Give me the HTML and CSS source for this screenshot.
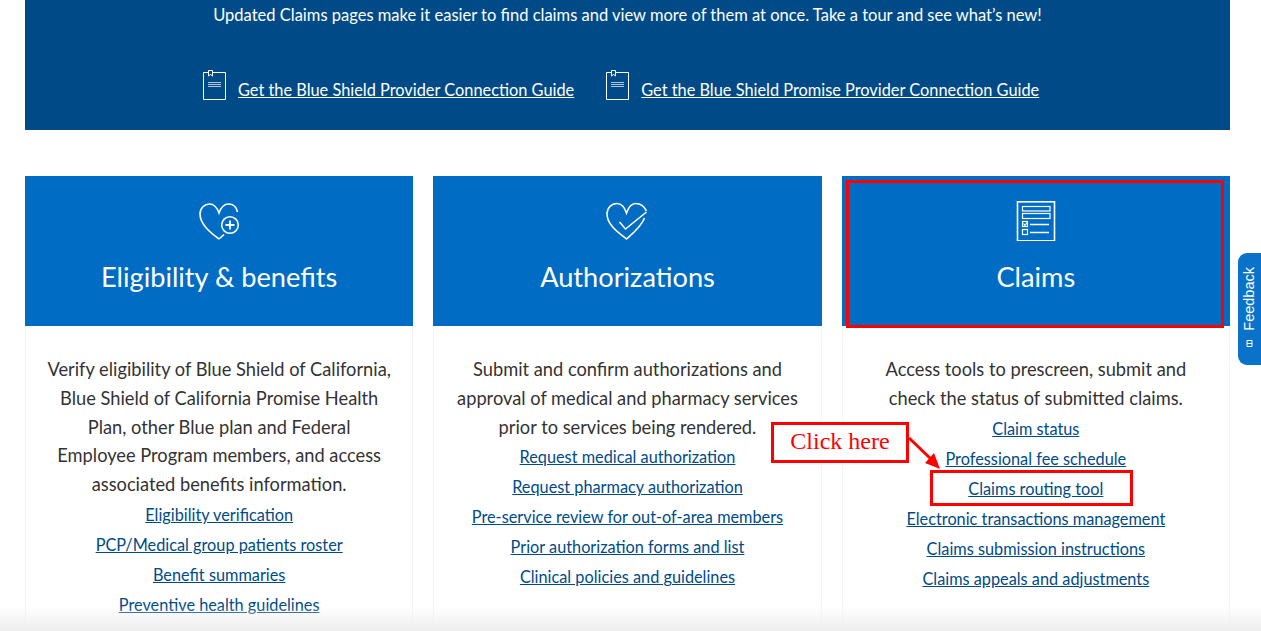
FILE: index.html
```html
<!DOCTYPE html>
<html lang="en">
<head>
    <meta charset="UTF-8">
    <title>Provider Connection</title>
    <link rel="stylesheet" href="styles.css">
</head>
<body>
    <div class="page">
        <section class="banner">
            <p class="banner-text">Updated Claims pages make it easier to find claims and view more of them at once. Take a tour and see what’s new!</p>
            <div class="guides">
                <div class="guide">
                    <svg class="guide-icon" width="24" height="31" viewBox="0 0 24 31" fill="none" stroke="#fff" stroke-width="1">
                        <path d="M5 2.500H.5V29.500H22.500V2.500H10"/>
                        <path d="M5.500 .5H9.500V6L7.500 4.500L5.500 6Z"/>
                        <path d="M5 12.500H18M5 14.500H18M5 16.500H18" stroke-opacity=".7"/>
                    </svg>
                    <a href="#">Get the Blue Shield Provider Connection Guide</a>
                </div>
                <div class="guide">
                    <svg class="guide-icon" width="24" height="31" viewBox="0 0 24 31" fill="none" stroke="#fff" stroke-width="1">
                        <path d="M5 2.500H.5V29.500H22.500V2.500H10"/>
                        <path d="M5.500 .5H9.500V6L7.500 4.500L5.500 6Z"/>
                        <path d="M5 12.500H18M5 14.500H18M5 16.500H18" stroke-opacity=".7"/>
                    </svg>
                    <a href="#">Get the Blue Shield Promise Provider Connection Guide</a>
                </div>
            </div>
        </section>

        <div class="cards">
            <section class="card">
                <header class="card-head">
                    <svg width="44" height="40" viewBox="0 0 44 40" fill="none" stroke="#fff" stroke-width="1.6">
                        <path d="M22 38C14 32 3 23.500 3 13C3 7 7.500 3 12.500 3C16.500 3 20 6.500 22 12C24 6.500 27.500 3 31.500 3C36 3 39.500 6 40.500 11"/>
                        <path d="M22 38L27 33.500"/>
                        <circle cx="33" cy="24" r="8.300"/>
                        <path d="M33 19.500V28.500M28.500 24H37.500" stroke-width="1.800"/>
                    </svg>
                    <h2>Eligibility &amp; benefits</h2>
                </header>
                <div class="card-body">
                    <p>Verify eligibility of Blue Shield of California, Blue Shield of California Promise Health Plan, other Blue plan and Federal Employee Program members, and access associated benefits information.</p>
                    <ul class="links">
                        <li><a href="#">Eligibility verification</a></li>
                        <li><a href="#">PCP/Medical group patients roster</a></li>
                        <li><a href="#">Benefit summaries</a></li>
                        <li><a href="#">Preventive health guidelines</a></li>
                    </ul>
                </div>
            </section>

            <section class="card">
                <header class="card-head">
                    <svg width="44" height="40" viewBox="0 0 44 40" fill="none" stroke="#fff" stroke-width="1.6">
                        <path d="M39.500 17C36 26 28 32 21.500 38C14 32 2 24 2 13C2 7 6.500 2.500 12 2.500C16 2.500 19.500 6 21.500 12C23.500 6 27 2.500 31 2.500C35.500 2.500 39 5 41.500 10"/>
                        <path d="M14.500 21L20.500 28L41.500 11"/>
                    </svg>
                    <h2>Authorizations</h2>
                </header>
                <div class="card-body">
                    <p>Submit and confirm authorizations and approval of medical and pharmacy services prior to services being rendered.</p>
                    <ul class="links">
                        <li><a href="#">Request medical authorization</a></li>
                        <li><a href="#">Request pharmacy authorization</a></li>
                        <li><a href="#">Pre-service review for out-of-area members</a></li>
                        <li><a href="#">Prior authorization forms and list</a></li>
                        <li><a href="#">Clinical policies and guidelines</a></li>
                    </ul>
                </div>
            </section>

            <section class="card">
                <header class="card-head">
                    <svg width="44" height="40" viewBox="0 0 44 40" fill="none" stroke="#fff" stroke-width="1.200">
                        <rect x="3.500" y=".8" width="37" height="39" stroke-width="1.600"/>
                        <rect x="8.500" y="5.500" width="27.500" height="4.500"/>
                        <rect x="8.500" y="12.500" width="27.500" height="5"/>
                        <rect x="8.500" y="20.500" width="5" height="5"/>
                        <path d="M9.500 22.500L11 24.500L13.500 21"/>
                        <rect x="8.500" y="28.500" width="5" height="5"/>
                        <path d="M16 23.500H35M16 31.500H35" stroke-width="1.600"/>
                    </svg>
                    <h2>Claims</h2>
                </header>
                <div class="card-body">
                    <p>Access tools to prescreen, submit and check the status of submitted claims.</p>
                    <ul class="links">
                        <li><a href="#">Claim status</a></li>
                        <li><a href="#">Professional fee schedule</a></li>
                        <li><a href="#">Claims routing tool</a></li>
                        <li><a href="#">Electronic transactions management</a></li>
                        <li><a href="#">Claims submission instructions</a></li>
                        <li><a href="#">Claims appeals and adjustments</a></li>
                    </ul>
                </div>
            </section>
        </div>
    </div>

    <!-- screenshot annotations -->
    <div class="mark mark-head"></div>
    <div class="mark mark-click">Click here</div>
    <div class="mark mark-tool"></div>
    <svg class="mark-arrow" width="36" height="36" viewBox="0 0 36 36">
        <path d="M1 1L24 23" stroke="#f00" stroke-width="3" fill="none"/>
        <path d="M32 32L17 26L26 16Z" fill="#f00"/>
    </svg>

    <div class="feedback">
        <span>Feedback</span>
        <svg width="7" height="7" viewBox="0 0 7 7" fill="none" stroke="#fff" stroke-width="1"><path d="M1 .5H6V6.500H1ZM1 3.500H6"/></svg>
    </div>
    <div class="fade"></div>
</body>
</html>
```

FILE: styles.css
```css
html, body {
    margin: 0;
    height: 631px;
    overflow: hidden;
}

body {
    background: #fff;
    font-family: "Lato", "Open Sans", sans-serif;
    color: #333;
}

.page {
    width: 1205px;
    margin-left: 25px;
}

.banner {
    height: 130px;
    box-sizing: border-box;
    background: #004b87;
    color: #fff;
    padding-top: 5px;
    text-align: center;
}

.banner-text {
    margin: 0;
    font-size: 16.500px;
    line-height: 20px;
}

.guides {
    display: flex;
    padding: 45px 0 0 178px;
    gap: 32px;
}

.guide {
    display: flex;
    align-items: flex-start;
    gap: 11px;
}

.guide-icon {
    flex-shrink: 0;
}

.guide a {
    color: #fff;
    font-size: 16.350px;
    line-height: 20px;
    margin-top: 10px;
}

.cards {
    display: grid;
    grid-template-columns: repeat(3, 1fr);
    gap: 20px;
    margin-top: 46px;
}

.card {
    height: 480px;
}

.card-head {
    height: 150px;
    box-sizing: border-box;
    background: #006cc4;
    color: #fff;
    padding-top: 25px;
    text-align: center;
}

.card-head svg {
    display: block;
    margin: 0 auto;
}

.card-head h2 {
    margin: 19px 0 0;
    font-size: 27.200px;
    line-height: 34px;
    font-weight: 400;
}

.card-body {
    height: 330px;
    box-sizing: border-box;
    border: 1px solid #f4f4f4;
    border-top: 0;
    padding: 29px 20.500px 0;
    text-align: center;
}

.card-body p {
    margin: 0;
    font-size: 18.250px;
    line-height: 28.800px;
}

.links {
    list-style: none;
    margin: 1px 0 0;
    padding: 0;
}

.links li {
    font-size: 16.300px;
    line-height: 30px;
}

.links a {
    color: #004b87;
}

.mark {
    position: absolute;
    box-sizing: border-box;
    border: 3px solid #f00;
}

.mark-head {
    left: 846px;
    top: 180px;
    width: 378px;
    height: 148px;
}

.mark-click {
    left: 771px;
    top: 422px;
    width: 138px;
    height: 41px;
    background: #fff;
    color: #f00;
    font: 24px/33px "Liberation Serif", serif;
    text-align: center;
}

.mark-tool {
    left: 930px;
    top: 470px;
    width: 203px;
    height: 36px;
}

.mark-arrow {
    position: absolute;
    left: 908px;
    top: 437px;
}

.feedback {
    position: absolute;
    left: 1238px;
    top: 253px;
    width: 23px;
    height: 112px;
    box-sizing: border-box;
    background: #0a73c9;
    border-radius: 9px 0 0 9px;
    color: #fff;
    display: flex;
    flex-direction: column;
    align-items: center;
    padding-top: 14px;
    gap: 9px;
}

.feedback span {
    writing-mode: vertical-rl;
    transform: rotate(180deg);
    font: 14.500px/23px "Liberation Sans", sans-serif;
}

.fade {
    position: absolute;
    left: 0;
    right: 0;
    top: 606px;
    height: 25px;
    background: linear-gradient(to bottom, rgba(235, 235, 235, 0), #eee);
}
```
